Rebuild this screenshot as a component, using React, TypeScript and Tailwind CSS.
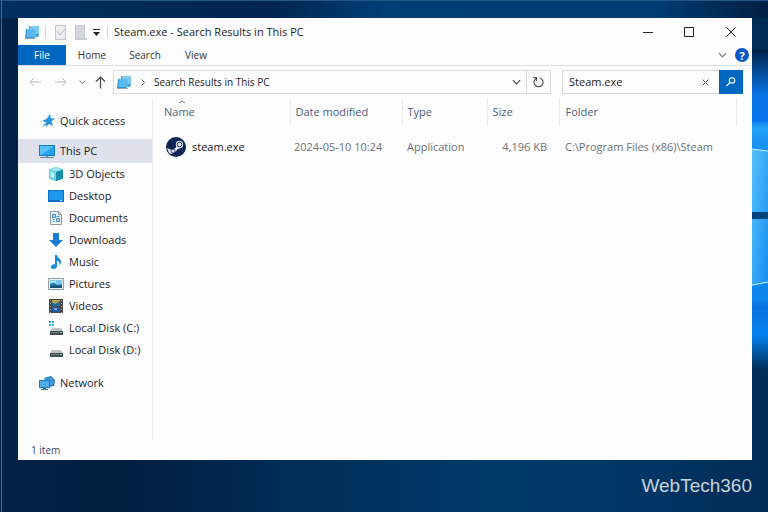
import { useState } from "react";
import type { ReactNode } from "react";

function StackIcon({ size }: { size: number }) {
  return (
    <svg width={size} height={size} viewBox="0 0 15 15" aria-hidden="true">
      <path d="M4 1h10v9l-1 2H4z" fill="#43a6e2" />
      <path d="M5 1h9v8H5z" fill="#7cc9f2" />
      <path d="M1 4h9v8l-2 2H0z" fill="#2c92d8" />
      <path d="M2 4h8.500v8H1.500z" fill="#5ab8ed" />
      <path d="M0 13h11v1H0z" fill="#93aabd" />
    </svg>
  );
}

function Glyph({ children }: { children: ReactNode }) {
  return (
    <svg className="size-4 shrink-0" viewBox="0 0 16 16" aria-hidden="true">
      {children}
    </svg>
  );
}

const star = (
  <Glyph>
    <path d="M10 1l1 4.500 4-.5-3.500 3.500L13 13l-4-2-3 3 .5-4.500L2 8l4.500-2z" fill="#2492df" />
    <path d="M2 14l4-4 1 1z" fill="#1769ad" />
  </Glyph>
);
const monitor = (
  <Glyph>
    <path d="M0 2h16v11H0z" fill="#147fc7" />
    <path d="M1 3h14v9H1z" fill="#27a1ec" />
    <path d="M1 3h14L2 12H1z" fill="#56c1f8" />
    <path d="M7 13h2v1h6v1H1v-1h6z" fill="#668da8" />
  </Glyph>
);
const cube = (
  <Glyph>
    <path d="M8 1l7 2.500v9L8 15l-7-2.500v-9z" fill="#2ba7c7" />
    <path d="M8 1l7 2.500L8 6 1 3.500z" fill="#9ce4f2" />
    <path d="M1 3.500L8 6v9l-7-2.500z" fill="#75d5e6" />
    <path d="M8 6l7-2.500v9L8 15z" fill="#168caf" />
    <path d="M3 6l3 1v5l-3-1z" fill="#c5f2f5" />
  </Glyph>
);
const desktop = (
  <Glyph>
    <path d="M0 2h16v12H0z" fill="#0d70c7" />
    <path d="M1 3h14v9H1z" fill="#1d96ed" />
    <path d="M12 12h2v1h-2z" fill="#c4eaff" />
  </Glyph>
);
const documents = (
  <Glyph>
    <path d="M2.500 1.500h8l3 3v10h-11z" fill="#eef3f7" stroke="#8c98a3" />
    <path d="M10.500 1.500v3h3" fill="none" stroke="#8c98a3" />
    <path d="M4.500 4.500h3v3h-3zM8.500 8.500h3v3h-3z" fill="#acd5f2" stroke="#4b8dbe" />
    <path d="M8.500 6.500h3M4.500 9.500h2M4.500 11.500h2" stroke="#3c8cc9" />
  </Glyph>
);
const download = (
  <Glyph>
    <path d="M5 1h6v7h4l-7 7-7-7h4z" fill="#1b7dd2" />
  </Glyph>
);
const music = (
  <Glyph>
    <path d="M7 1h2c0 3 4 3.500 4 7 0 1.500-.5 2.500-1.500 3.500.5-3-1-4.500-2.500-5V12c0 1.800-1.500 3-3.500 3S3 14 3 12.700C3 11 5 10 7 10.500z" fill="#1688db" />
  </Glyph>
);
const pictures = (
  <Glyph>
    <path d="M.5 2.500h15v11H.5z" fill="#edf2f5" stroke="#969fa7" />
    <path d="M2 4h12v8H2z" fill="#75c8ed" />
    <path d="M2 8l4-1 3 2 5-1v4H2z" fill="#287aa4" />
    <path d="M2 10l5-1 7 1v2H2z" fill="#1c5677" />
    <path d="M3 5h5v1H3z" fill="#fff" />
  </Glyph>
);
const videos = (
  <Glyph>
    <path d="M1 1h14v14H1z" fill="#43474c" />
    <path d="M4 2h8v6H4z" fill="#b4a651" />
    <path d="M4 4l3 2 5-3v5H4z" fill="#226d9f" />
    <path d="M4 9h8v5H4z" fill="#235ba7" />
    <path d="M6 10h3v2H6z" fill="#7ea7d7" />
    <path d="M2.500 2v13M13.500 2v13" stroke="#a3a8ac" strokeDasharray="1 2" />
  </Glyph>
);
const driveBody = (
  <>
    <path d="M4 8h9l2 3H2z" fill="#bdc2c5" />
    <path d="M2 11h13v4H2z" fill="#484f53" />
    <path d="M3 12h8v1H3z" fill="#747d81" />
    <path d="M12 12h2v1h-2z" fill="#75df85" />
  </>
);
const diskC = (
  <Glyph>
    {driveBody}
    <path d="M1 1h2v2H1zM4 1h2v2H4zM1 4h2v2H1zM4 4h2v2H4z" fill="#34acea" />
  </Glyph>
);
const diskD = <Glyph>{driveBody}</Glyph>;
const network = (
  <Glyph>
    <path d="M5 3l7-2 4 4-1 6-6 1z" fill="#1c70b5" />
    <path d="M6 3l6-1 3 3-1 5-6 1z" fill="#3d98da" />
    <path d="M0 5h11v8H0z" fill="#1875bf" />
    <path d="M1 6h9v6H1z" fill="#50aeea" />
    <path d="M4 13h3v1h2v1H2v-1h2z" fill="#3c789f" />
  </Glyph>
);

const folders = [
  { label: "3D Objects", icon: cube },
  { label: "Desktop", icon: desktop },
  { label: "Documents", icon: documents },
  { label: "Downloads", icon: download },
  { label: "Music", icon: music },
  { label: "Pictures", icon: pictures },
  { label: "Videos", icon: videos },
  { label: "Local Disk (C:)", icon: diskC },
  { label: "Local Disk (D:)", icon: diskD },
];

function Chevron({ className }: { className: string }) {
  return (
    <svg className={className} viewBox="0 0 10 6" fill="none" stroke="currentColor" strokeWidth="1.300" aria-hidden="true">
      <path d="M1 1l4 4 4-4" />
    </svg>
  );
}

function TitleBar() {
  return (
    <header className="flex h-[27px] items-center pt-px pl-[7px]">
      <StackIcon size={15} />
      <span className="ml-[5px] h-3 w-px bg-[#d4d4d4]" />
      <button aria-label="Properties" className="ml-2">
        <svg width="13" height="15" viewBox="0 0 13 15" fill="none" aria-hidden="true">
          <path d="M1.500.5h10v14h-10z" fill="#eeeff1" stroke="#c3c5ca" />
          <path d="M3 6l3 4 5-6" stroke="#b7b9c0" />
        </svg>
      </button>
      <button aria-label="New folder" className="ml-2">
        <svg width="12" height="15" viewBox="0 0 12 15" aria-hidden="true">
          <path d="M0 0h10v13h2v2H0z" fill="#c9ccd3" />
          <path d="M1 1h8v12H1z" fill="#d3d6dc" />
        </svg>
      </button>
      <button aria-label="Customize Quick Access Toolbar" className="ml-[6px]">
        <svg width="7" height="8" viewBox="0 0 7 8" aria-hidden="true">
          <path d="M0 1h7v1H0zM0 4h7L3.500 8z" fill="#222" />
        </svg>
      </button>
      <span className="ml-[7px] h-3 w-px bg-[#d4d4d4]" />
      <h1 className="ml-[6px] flex-1 text-[11px] text-[#1c1c1c]">Steam.exe - Search Results in This PC</h1>
      <div className="flex pr-[5px] text-[#222]">
        <button aria-label="Minimize" className="grid h-[26px] w-8 place-items-center">
          <svg width="10" height="10" viewBox="0 0 10 10" stroke="currentColor" aria-hidden="true">
            <path d="M0 5.500h10" />
          </svg>
        </button>
        <button aria-label="Maximize" className="ml-[9px] grid h-[26px] w-8 place-items-center">
          <svg width="10" height="10" viewBox="0 0 10 10" fill="none" stroke="currentColor" aria-hidden="true">
            <path d="M.5.5h9v9h-9z" />
          </svg>
        </button>
        <button aria-label="Close" className="ml-[10px] grid h-[26px] w-8 place-items-center">
          <svg width="10" height="10" viewBox="0 0 10 10" stroke="currentColor" aria-hidden="true">
            <path d="M.5.5l9 9M9.500.5l-9 9" />
          </svg>
        </button>
      </div>
    </header>
  );
}

function Ribbon() {
  return (
    <div className="flex h-[21px] items-stretch border-b border-[#dcdde0] text-[10px] text-[#333]">
      <button className="w-12 bg-[#0067c0] text-white">File</button>
      <button className="w-[52px]">Home</button>
      <button className="w-[54px]">Search</button>
      <button className="w-12">View</button>
      <button aria-label="Expand the Ribbon" className="ml-auto px-1 text-[#777]">
        <Chevron className="h-[6px] w-[9px]" />
      </button>
      <button
        aria-label="Help"
        className="mr-[3px] ml-1 grid size-[14px] place-items-center self-center rounded-full bg-[#0a58c4] text-[11px] leading-none font-bold text-white"
      >
        ?
      </button>
    </div>
  );
}

function AddressRow() {
  const [query, setQuery] = useState("Steam.exe");
  return (
    <div className="flex h-8 items-center pr-[9px] pl-[11px] text-[11px]">
      <button aria-label="Back" className="text-[#b5b5b5]">
        <svg width="13" height="10" viewBox="0 0 13 10" fill="none" stroke="currentColor" aria-hidden="true">
          <path d="M12 5H1M5 1L1 5l4 4" />
        </svg>
      </button>
      <button aria-label="Forward" className="ml-3 text-[#b5b5b5]">
        <svg width="13" height="10" viewBox="0 0 13 10" fill="none" stroke="currentColor" aria-hidden="true">
          <path d="M1 5h11M8 1l4 4-4 4" />
        </svg>
      </button>
      <button aria-label="Recent locations" className="ml-3 text-[#555]">
        <Chevron className="h-1 w-[7px]" />
      </button>
      <button aria-label="Up" className="ml-[9px] text-[#444]">
        <svg width="11" height="13" viewBox="0 0 11 13" fill="none" stroke="currentColor" strokeWidth="1.200" aria-hidden="true">
          <path d="M5.500 12.500V1M1 5.500L5.500 1 10 5.500" />
        </svg>
      </button>
      <div className="ml-[7px] flex h-6 flex-1 items-center border border-[#dcdcdc]">
        <span className="ml-[3px]">
          <StackIcon size={15} />
        </span>
        <svg className="ml-[9px]" width="4" height="7" viewBox="0 0 4 7" fill="none" stroke="#555" aria-hidden="true">
          <path d="M.5.5l3 3-3 3" />
        </svg>
        <button className="ml-[9px] text-[10px] text-[#1c1c1c]">Search Results in This PC</button>
        <button aria-label="Previous locations" className="mr-[5px] ml-auto text-[#444]">
          <Chevron className="h-[6px] w-[9px]" />
        </button>
      </div>
      <button aria-label="Refresh" className="grid h-6 w-6 place-items-center border border-l-0 border-[#dcdcdc] text-[#555]">
        <svg width="11" height="12" viewBox="0 0 11 12" fill="none" stroke="currentColor" strokeWidth="1.200" aria-hidden="true">
          <path d="M7 2a4.500 4.500 0 1 1-4 .5M0 1.500h3.500V5" />
        </svg>
      </button>
      <div className="ml-[11px] flex h-6 w-[181px]">
        <div className="flex flex-1 items-center border border-r-0 border-[#dcdcdc]">
          <input
            aria-label="Search"
            value={query}
            onChange={(event) => setQuery(event.target.value)}
            className="w-0 flex-1 pl-[6px] text-[#1c1c1c] outline-none"
          />
          <button aria-label="Clear search" onClick={() => setQuery("")} className="mr-[10px] text-[#555]">
            <svg width="7" height="7" viewBox="0 0 7 7" stroke="currentColor" aria-hidden="true">
              <path d="M.5.5l6 6M6.500.5l-6 6" />
            </svg>
          </button>
        </div>
        <button aria-label="Run search" className="grid w-6 place-items-center bg-[#0067c0] text-white">
          <svg width="10" height="10" viewBox="0 0 10 10" fill="none" stroke="currentColor" strokeWidth="1.100" aria-hidden="true">
            <circle cx="6" cy="3.500" r="2.700" />
            <path d="M4 5.500L.5 9" />
          </svg>
        </button>
      </div>
    </div>
  );
}

function Sidebar() {
  return (
    <nav className="w-[135px] shrink-0 border-r border-[#ededf0] pt-3 text-[11px] text-[#1c1c1c]">
      <a href="#quick-access" className="flex h-[22px] items-center gap-1 pl-[22px]">
        {star}
        Quick access
      </a>
      <a href="#this-pc" aria-current="page" className="mt-[7px] flex h-6 items-center gap-[5px] bg-[#dfe2ec] pl-[21px]">
        {monitor}
        This PC
      </a>
      <ul>
        {folders.map((folder) => (
          <li key={folder.label}>
            <a href="#folder" className="flex h-[22px] items-center gap-[5px] pl-[30px]">
              {folder.icon}
              {folder.label}
            </a>
          </li>
        ))}
      </ul>
      <a href="#network" className="mt-[11px] flex h-[22px] items-center gap-[5px] pl-[21px]">
        {network}
        Network
      </a>
    </nav>
  );
}

function SteamLogo() {
  return (
    <svg className="size-5" viewBox="0 0 20 20" aria-hidden="true">
      <circle cx="10" cy="10" r="10" fill="#0c2453" />
      <path d="M1 11l6 2.500L11 9l1-3 5 2-2 3-3 1-3 3-3 2-3-1z" fill="#e6ebf3" />
      <circle cx="13.500" cy="7.500" r="3.700" fill="#e6ebf3" />
      <circle cx="13.500" cy="7.500" r="2.300" fill="#e6ebf3" stroke="#0c2453" />
      <circle cx="7" cy="14" r="2" fill="#e6ebf3" stroke="#0c2453" strokeWidth=".8" />
    </svg>
  );
}

function Results() {
  return (
    <main className="min-w-0 flex-1 pr-[15px]">
      <table className="w-full table-fixed text-left text-[11px]">
        <thead className="text-[#4c5d7c]">
          <tr className="h-7 [&>th]:border-r [&>th]:border-[#ebebef] [&>th]:font-normal">
            <th className="w-[137px] pl-[11px]">
              <span className="relative">
                Name
                <svg className="absolute -top-1 left-[14px]" width="8" height="4" viewBox="0 0 8 4" fill="none" stroke="#777" aria-hidden="true">
                  <path d="M1 3l3-2 3 2" />
                </svg>
              </span>
            </th>
            <th className="w-28 pl-[5px]">Date modified</th>
            <th className="w-[85px] pl-[5px]">Type</th>
            <th className="w-[72px] pl-[5px]">Size</th>
            <th className="pl-[6px]">Folder</th>
          </tr>
        </thead>
        <tbody className="text-[#707276]">
          <tr className="h-[42px]">
            <td className="pl-[13px]">
              <span className="flex items-center gap-[6px] text-[#161616]">
                <SteamLogo />
                steam.exe
              </span>
            </td>
            <td className="pl-1">2024-05-10 10:24</td>
            <td className="pl-[5px]">Application</td>
            <td className="pr-3 text-right">4,196 KB</td>
            <td className="pl-[6px]">C:\Program Files (x86)\Steam</td>
          </tr>
        </tbody>
      </table>
    </main>
  );
}

function Wallpaper() {
  return (
    <svg className="absolute inset-0 size-full" viewBox="0 0 768 512" preserveAspectRatio="none" aria-hidden="true">
      <defs>
        <linearGradient id="base">
          <stop offset="0" stopColor="#002346" />
          <stop offset=".15" stopColor="#001e3e" />
          <stop offset=".35" stopColor="#002b55" />
          <stop offset=".65" stopColor="#003a6c" />
          <stop offset=".85" stopColor="#003565" />
          <stop offset="1" stopColor="#002b55" />
        </linearGradient>
        <linearGradient id="top">
          <stop offset="0" stopColor="#00305f" />
          <stop offset=".35" stopColor="#002550" />
          <stop offset=".5" stopColor="#003e76" />
          <stop offset=".85" stopColor="#003d74" />
          <stop offset="1" stopColor="#001f43" />
        </linearGradient>
        <linearGradient id="glow" x1="0" y1="0" x2="0" y2="1">
          <stop offset="0" stopColor="#002349" />
          <stop offset=".14" stopColor="#0873e4" />
          <stop offset=".22" stopColor="#0675ec" />
          <stop offset=".24" stopColor="#22a0f8" />
          <stop offset=".32" stopColor="#148df4" />
          <stop offset=".78" stopColor="#0d86ee" />
          <stop offset=".8" stopColor="#0871df" />
          <stop offset=".89" stopColor="#0583ef" />
          <stop offset="1" stopColor="#002b55" />
        </linearGradient>
        <linearGradient id="pane" x1="0" y1="0" x2="1" y2="1">
          <stop offset="0" stopColor="#55c1fb" />
          <stop offset="1" stopColor="#168ef2" />
        </linearGradient>
      </defs>
      <path d="M0 0h768v512H0z" fill="url(#base)" />
      <path d="M0 0h768v18H0z" fill="url(#top)" />
      <path d="M752 50h16v320h-16z" fill="url(#glow)" />
      <path d="M752 149l16 2v61h-16zM752 219h16v64l-16 3z" fill="url(#pane)" />
      <path d="M752 149l16 2M752 285l16-3" stroke="#c4eeff" />
      <path d="M752 212h16v7h-16z" fill="#05427e" />
      <path d="M0 .5h768" stroke="#215886" />
      <path d="M1.500 0v512" stroke="#416b9c" />
    </svg>
  );
}

export default function App() {
  return (
    <div className="relative flex min-h-screen flex-col bg-[#002b55] pt-[18px] pr-4 pl-[18px] font-['Open_Sans','Noto_Sans',sans-serif]">
      <Wallpaper />
      <section className="relative flex flex-1 flex-col bg-[#fdfdfe]">
        <TitleBar />
        <Ribbon />
        <AddressRow />
        <div className="flex flex-1">
          <Sidebar />
          <Results />
        </div>
        <footer className="flex h-5 items-center pl-[13px] text-[10px] text-[#3f4570]">1 item</footer>
      </section>
      <p className="relative flex h-[52px] items-center justify-end font-['Liberation_Sans',Arial,sans-serif] text-[19px] text-[#ccd2d9]">
        WebTech360
      </p>
    </div>
  );
}
